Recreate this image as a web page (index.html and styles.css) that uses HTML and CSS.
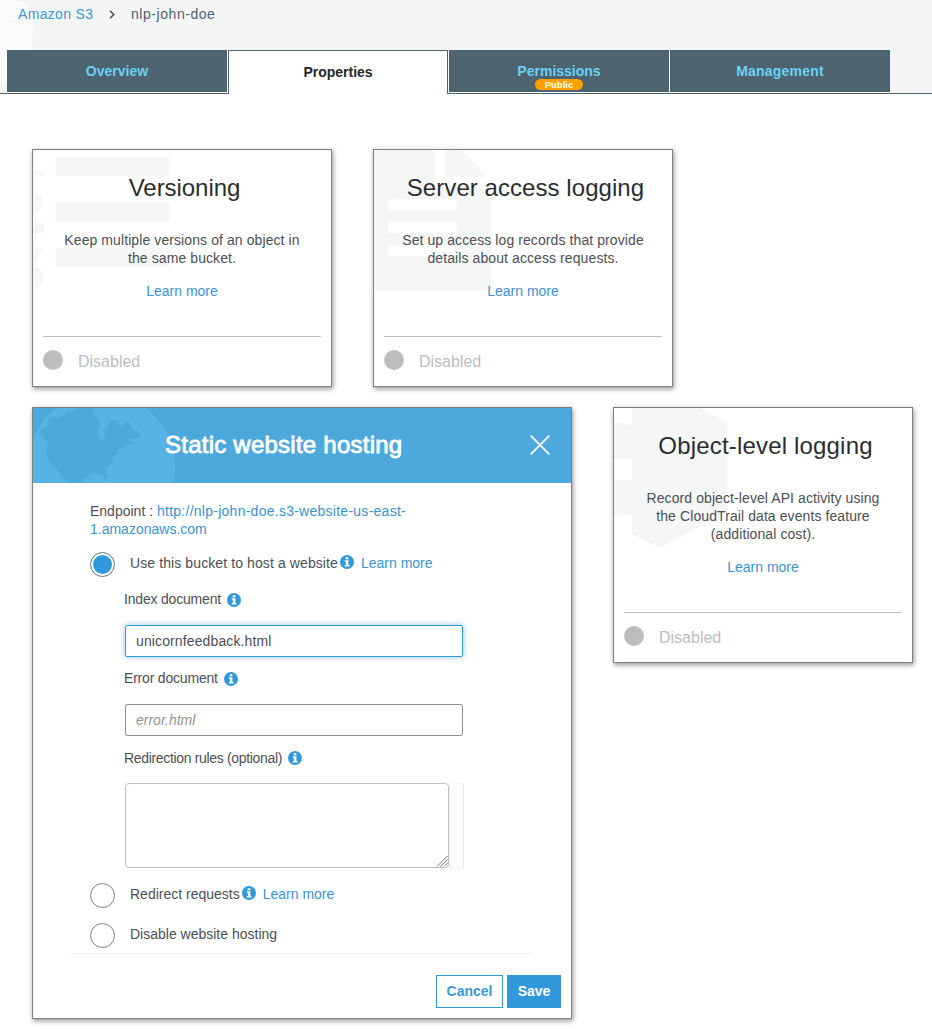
FILE: index.html
```html
<!DOCTYPE html>
<html lang="en">
<head>
<meta charset="utf-8">
<title>Amazon S3 - nlp-john-doe</title>
<link rel="stylesheet" href="styles.css">
</head>
<body>
<svg class="defs" width="0" height="0">
  <symbol id="info" viewBox="0 0 14 14">
    <circle cx="7" cy="7" r="7" fill="#3199d9"/>
    <path d="M5.7 2.3h2.7v2H5.700zM4.800 5.300h3.600v4.600h1.100v1.500H4.800V9.900h1.100V6.800H4.800z" fill="#fff"/>
  </symbol>
</svg>
<header class="header">
  <svg class="bucket" width="40" height="93" viewBox="0 0 120 279">
    <path d="M0 0H40Q85 8 106 42L92 150L70 279H60Q20 260 0 232Z" fill="#fafcfb"/>
    <path d="M0 62Q60 64 104 48L102 66Q60 72 0 66Z" fill="#f7f9f8"/>
  </svg>
  <nav class="crumbs">
    <a class="crumb-root">Amazon S3</a>
    <svg class="chevron" width="6" height="9" viewBox="0 0 6 9"><path d="M1 .8L4.800 4.500L1 8.200" fill="none" stroke="#3c4448" stroke-width="1.300"/></svg>
    <span class="crumb-current">nlp-john-doe</span>
  </nav>
  <nav class="tabs">
    <a class="tab">Overview</a>
    <a class="tab active">Properties</a>
    <a class="tab">Permissions<span class="badge">Public</span></a>
    <a class="tab">Management</a>
  </nav>
</header>
<main class="board">
  <div class="row">
    <section class="card">
      <svg class="mark" width="150" height="150" viewBox="39 30 450 450" fill="#f5f7f7">
        <rect x="107" y="51" width="342" height="56" rx="5"/><rect x="107" y="188" width="342" height="55" rx="5"/><rect x="107" y="325" width="342" height="56" rx="5"/>
        <path d="M39 93H72V107H39ZM39 155Q67 160 67 187Q67 214 39 225ZM45 249H72V279H39V263H45ZM39 325H67L45 375H39ZM39 381Q70 384 70 413Q70 442 39 448Z"/>
      </svg>
      <h2 class="title t-ver">Versioning</h2>
      <p class="desc">Keep multiple versions of an object in<br>the same bucket.</p>
      <a class="link more">Learn more</a>
      <div class="status"><i class="dot"></i><span>Disabled</span></div>
    </section>
    <section class="card">
      <svg class="mark" width="150" height="150" viewBox="42 30 450 450" fill="#f5f7f7">
        <path d="M42 30H222V143H393V450H42ZM255 30H305L382 110H255Z"/>
        <g fill="#fff"><rect x="85" y="178" width="205" height="35" rx="8"/><rect x="85" y="246" width="205" height="34" rx="8"/><rect x="85" y="314" width="205" height="34" rx="8"/></g>
      </svg>
      <h2 class="title">Server access logging</h2>
      <p class="desc">Set up access log records that provide<br>details about access requests.</p>
      <a class="link more">Learn more</a>
      <div class="status"><i class="dot"></i><span>Disabled</span></div>
    </section>
  </div>
  <div class="row">
    <section class="card wide">
      <div class="panel-head">
        <svg class="mark" width="180" height="75" viewBox="39 24 540 225">
          <circle cx="243" cy="202" r="222" fill="#56b3e3"/>
          <path d="M57 98L72 82L90 77L79 70L84 57L102 50L114 54L128 47L139 51L132 42L144 32L170 34L172 24H222L228 35L215 40L228 50L237 63L240 74L232 90L237 108L246 128L254 116L258 105L248 93L266 77L266 59L290 62L296 75L309 78L316 66L328 68L337 87L350 91L363 105L354 113L322 117L330 124L342 126L332 134L314 132L310 142L292 150L290 162L276 172L279 186L262 202L256 216L263 230L261 245L254 240L248 224L225 218L202 225L189 240L187 249H142L136 237L125 235L113 211L94 193L78 165L79 149L86 131L75 113Z" fill="#4da8dc"/>
        </svg>
        <h2 class="panel-title">Static website hosting</h2>
        <svg class="close" width="20" height="20" viewBox="0 0 20 20"><path d="M.7.7L19.300 19.300M19.300.7L.7 19.300" stroke="#fff" stroke-width="1.700"/></svg>
      </div>
      <div class="panel-body">
        <p class="endpoint">Endpoint : <a class="link"><span class="url">http://nlp-john-doe.s3-website-us-east-</span><br>1.amazonaws.com</a></p>
        <div class="option"><i class="radio on"></i><span class="opt-text o1">Use this bucket to host a website</span><svg class="info tight"><use href="#info"/></svg><a class="link opt-link">Learn more</a></div>
        <div class="fields">
          <div class="label"><span>Index document</span><svg class="info"><use href="#info"/></svg></div>
          <input class="input focus" value="unicornfeedback.html">
          <div class="label l2"><span>Error document</span><svg class="info"><use href="#info"/></svg></div>
          <input class="input" placeholder="error.html">
          <div class="label l3"><span>Redirection rules (optional)</span><svg class="info"><use href="#info"/></svg></div>
          <div class="area-wrap">
            <div class="area"><svg width="12" height="12" viewBox="0 0 12 12"><path d="M1 11.500L11.500 1M4.500 11.500L11.500 4.500M8 11.500L11.500 8" stroke="#777" stroke-width="1" fill="none"/></svg></div>
            <div class="track"></div>
          </div>
        </div>
        <div class="option"><i class="radio"></i><span class="opt-text">Redirect requests</span><svg class="info tight"><use href="#info"/></svg><a class="link opt-link">Learn more</a></div>
        <div class="option last"><i class="radio"></i><span class="opt-text">Disable website hosting</span></div>
        <div class="rule"></div>
        <div class="actions"><button class="btn">Cancel</button><button class="btn primary">Save</button></div>
      </div>
    </section>
    <section class="card tall">
      <svg class="mark" width="150" height="150" viewBox="42 24 450 450" fill="#f5f7f7">
        <path d="M96 24H300L382 66V335L180 444L96 403V340L60 348L42 345V240H96V177H42V70L52 67L96 75Z"/>
      </svg>
      <h2 class="title t-obj">Object-level logging</h2>
      <p class="desc">Record object-level API activity using<br>the CloudTrail data events feature<br>(additional cost).</p>
      <a class="link more">Learn more</a>
      <div class="status"><i class="dot"></i><span>Disabled</span></div>
    </section>
  </div>
</main>
</body>
</html>
```

FILE: styles.css
```css
* { box-sizing: border-box; }
body { margin: 0; background: #fff; color: #4c5053; font: 14px/18px "Liberation Sans", Arial, sans-serif; }
h2, p { margin: 0; font-weight: normal; }
.defs { position: absolute; }
.header { position: relative; height: 94px; background: #f4f6f6; border-bottom: 1px solid #4d6470; }
.bucket { position: absolute; left: 0; top: 0; }
.crumbs { position: relative; display: flex; align-items: center; height: 28px; padding-left: 18px; }
.crumb-root { color: #3f97d6; width: 91px; letter-spacing: .33px; }
.chevron { margin-right: 16px; }
.crumb-current { color: #4d6470; letter-spacing: .55px; }
.tabs { position: relative; display: flex; gap: 1px; width: 883px; margin: 22px 0 0 7px; height: 44px; }
.tab { position: relative; flex: none; width: 220px; height: 42px; background: #4d6470; color: #69d2f3; font-weight: bold; line-height: 42px; text-align: center; box-shadow: 1px 1px 0 #fff; }
.tab:last-child { box-shadow: 0 1px 0 #fff; letter-spacing: .2px; }
.tab.active { height: 44px; background: #fff; color: #232729; line-height: 42px; border: 1px solid #4d6470; border-bottom: 0; z-index: 1; box-shadow: none; }
.badge { position: absolute; left: 86px; top: 29px; width: 48px; height: 11px; border-radius: 6px; background: #ff9f00; color: #fff; font-size: 9.500px; line-height: 11px; }
.board { display: flex; flex-direction: column; gap: 20px; padding: 55px 0 10px 32px; }
.row { display: flex; align-items: flex-start; gap: 41px; }
.card { position: relative; display: flex; flex-direction: column; width: 300px; height: 238px; border: 1px solid #7e8080; background: #fff; box-shadow: 1px 2px 5px rgba(0,0,0,.42); text-align: center; }
.card.tall { height: 256px; }
.card.wide { width: 540px; height: 612px; text-align: left; }
.mark { position: absolute; left: 0; top: 0; }
.title { position: relative; padding: 24px 0 0 5px; font-size: 24px; line-height: 28px; color: #2a2e30; letter-spacing: .06px; }
.title.t-ver { letter-spacing: -.05px; }
.title.t-obj { letter-spacing: .18px; }
.desc { position: relative; margin-top: 29px; letter-spacing: .09px; }
.link { color: #3b93d3; }
.more { position: relative; margin-top: 15px; }
.status { display: flex; gap: 15px; margin: auto 10px 0; height: 50px; padding-top: 13px; border-top: 1px solid #bcbebe; color: #bcbebe; font-size: 16px; line-height: 23px; }
.dot { width: 20px; height: 20px; border-radius: 50%; background: #bcbebe; }
.panel-head { position: relative; display: flex; align-items: center; height: 75px; background: #4da8dc; padding: 0 0 2px 132px; }
.panel-title { position: relative; width: 365px; font-size: 24px; line-height: 28px; color: #fff; letter-spacing: .24px; -webkit-text-stroke: .8px #fff; }
.panel-body { display: flex; flex-direction: column; padding: 19px 10px 10px 57px; }
.url { letter-spacing: .26px; }
.option { display: flex; align-items: center; height: 25px; margin-top: 14px; }
.option.last { margin-top: 15px; }
.radio { width: 25px; height: 25px; margin-right: 15px; border: 1px solid #7e8585; border-radius: 50%; }
.radio.on { background: #3199d9; border-color: #7e8585; box-shadow: inset 0 0 0 2px #fff; }
.opt-text, .opt-link { padding-bottom: 3px; }
.opt-text.o1 { letter-spacing: .1px; }
.info { width: 14px; height: 14px; margin: 2px 0 0 6px; }
.info.tight { margin: 0 7px 5px 2px; }
.fields { display: flex; flex-direction: column; padding: 13px 0 0 34px; }
.label { display: flex; align-items: center; height: 18px; letter-spacing: -.19px; }
.l2 { margin-top: 12px; }
.l3 { margin-top: 13px; letter-spacing: -.33px; }
.l3 .info { margin-top: 0; }
.input { width: 338px; height: 32px; margin: 17px 0 0 1px; padding: 0 10px; border: 1px solid #8b9090; border-radius: 2px; outline: 0; font: 14px "Liberation Sans", Arial, sans-serif; color: #4c5053; }
.input.focus { border-color: #3199d9; box-shadow: 0 0 6px rgba(49,140,220,.5); letter-spacing: .12px; }
.input::placeholder { color: #929494; font-style: italic; opacity: 1; }
.area-wrap { display: flex; width: 339px; height: 86px; margin: 16px 0 0 1px; }
.area { display: flex; align-items: flex-end; justify-content: flex-end; width: 324px; height: 85px; border: 1px solid #bfc1c1; border-radius: 4px; }
.track { flex: 1; background: #fafafa; border-right: 1px solid #e8e8e8; border-left: 1px solid #eee; }
.rule { width: 462px; height: 1px; margin: 5px 0 0 -19px; background: #f1f2f2; }
.actions { display: flex; justify-content: flex-end; gap: 4px; margin-top: 21px; }
.btn { width: 67px; height: 33px; padding: 0 0 2px; border: 1px solid #3199d9; background: #fff; color: #3f97d6; font: bold 14px "Liberation Sans", Arial, sans-serif; }
.btn.primary { width: 54px; background: #3199d9; color: #fff; }
```
